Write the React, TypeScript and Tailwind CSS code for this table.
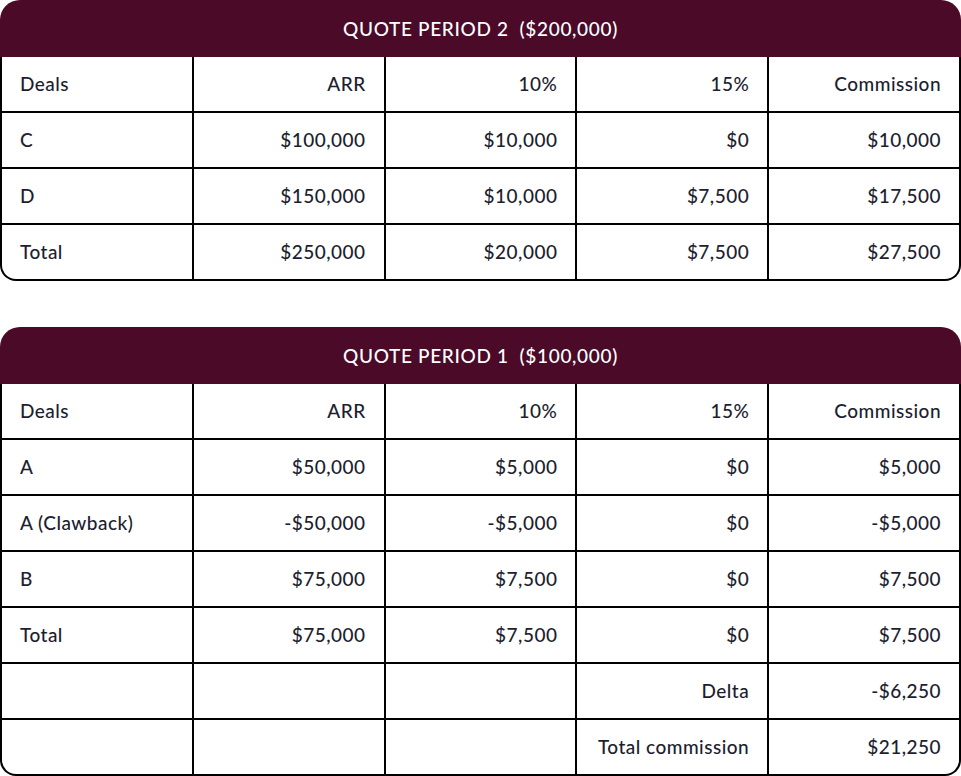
const headers = ["Deals", "ARR", "10%", "15%", "Commission"];

const period2 = [
  ["C", "$100,000", "$10,000", "$0", "$10,000"],
  ["D", "$150,000", "$10,000", "$7,500", "$17,500"],
  ["Total", "$250,000", "$20,000", "$7,500", "$27,500"],
];

const period1 = [
  ["A", "$50,000", "$5,000", "$0", "$5,000"],
  ["A (Clawback)", "-$50,000", "-$5,000", "$0", "-$5,000"],
  ["B", "$75,000", "$7,500", "$0", "$7,500"],
  ["Total", "$75,000", "$7,500", "$0", "$7,500"],
  ["", "", "", "Delta", "-$6,250"],
  ["", "", "", "Total commission", "$21,250"],
];

function QuoteTable({ title, rows }: { title: string; rows: string[][] }) {
  const all = [headers, ...rows];
  return (
    <div className="w-full">
      <div className="h-[57px] pt-[2px] rounded-t-[20px] bg-[#4a0a28] flex items-center justify-center text-white text-[19px] font-medium tracking-[0.035em] whitespace-pre">
        {title}
      </div>
      <div className="grid grid-cols-5 gap-[2px] bg-black border-2 border-t-0 border-black rounded-b-[16px] overflow-hidden">
        {all.map((row, i) =>
          row.map((cell, j) => (
            <div
              key={`${i}-${j}`}
              className={`h-[54px] bg-white flex items-center text-[19px] font-medium tracking-[0.025em] text-[#1d1e2f] ${
                j === 0 ? "pl-[18px]" : "justify-end pr-[18px]"
              }`}
            >
              {cell}
            </div>
          ))
        )}
      </div>
    </div>
  );
}

export default function App() {
  return (
    <div className="w-[961px] bg-white flex flex-col gap-[46px]" style={{ fontFamily: "Lato, sans-serif" }}>
      <QuoteTable title="QUOTE PERIOD 2  ($200,000)" rows={period2} />
      <QuoteTable title="QUOTE PERIOD 1  ($100,000)" rows={period1} />
    </div>
  );
}
